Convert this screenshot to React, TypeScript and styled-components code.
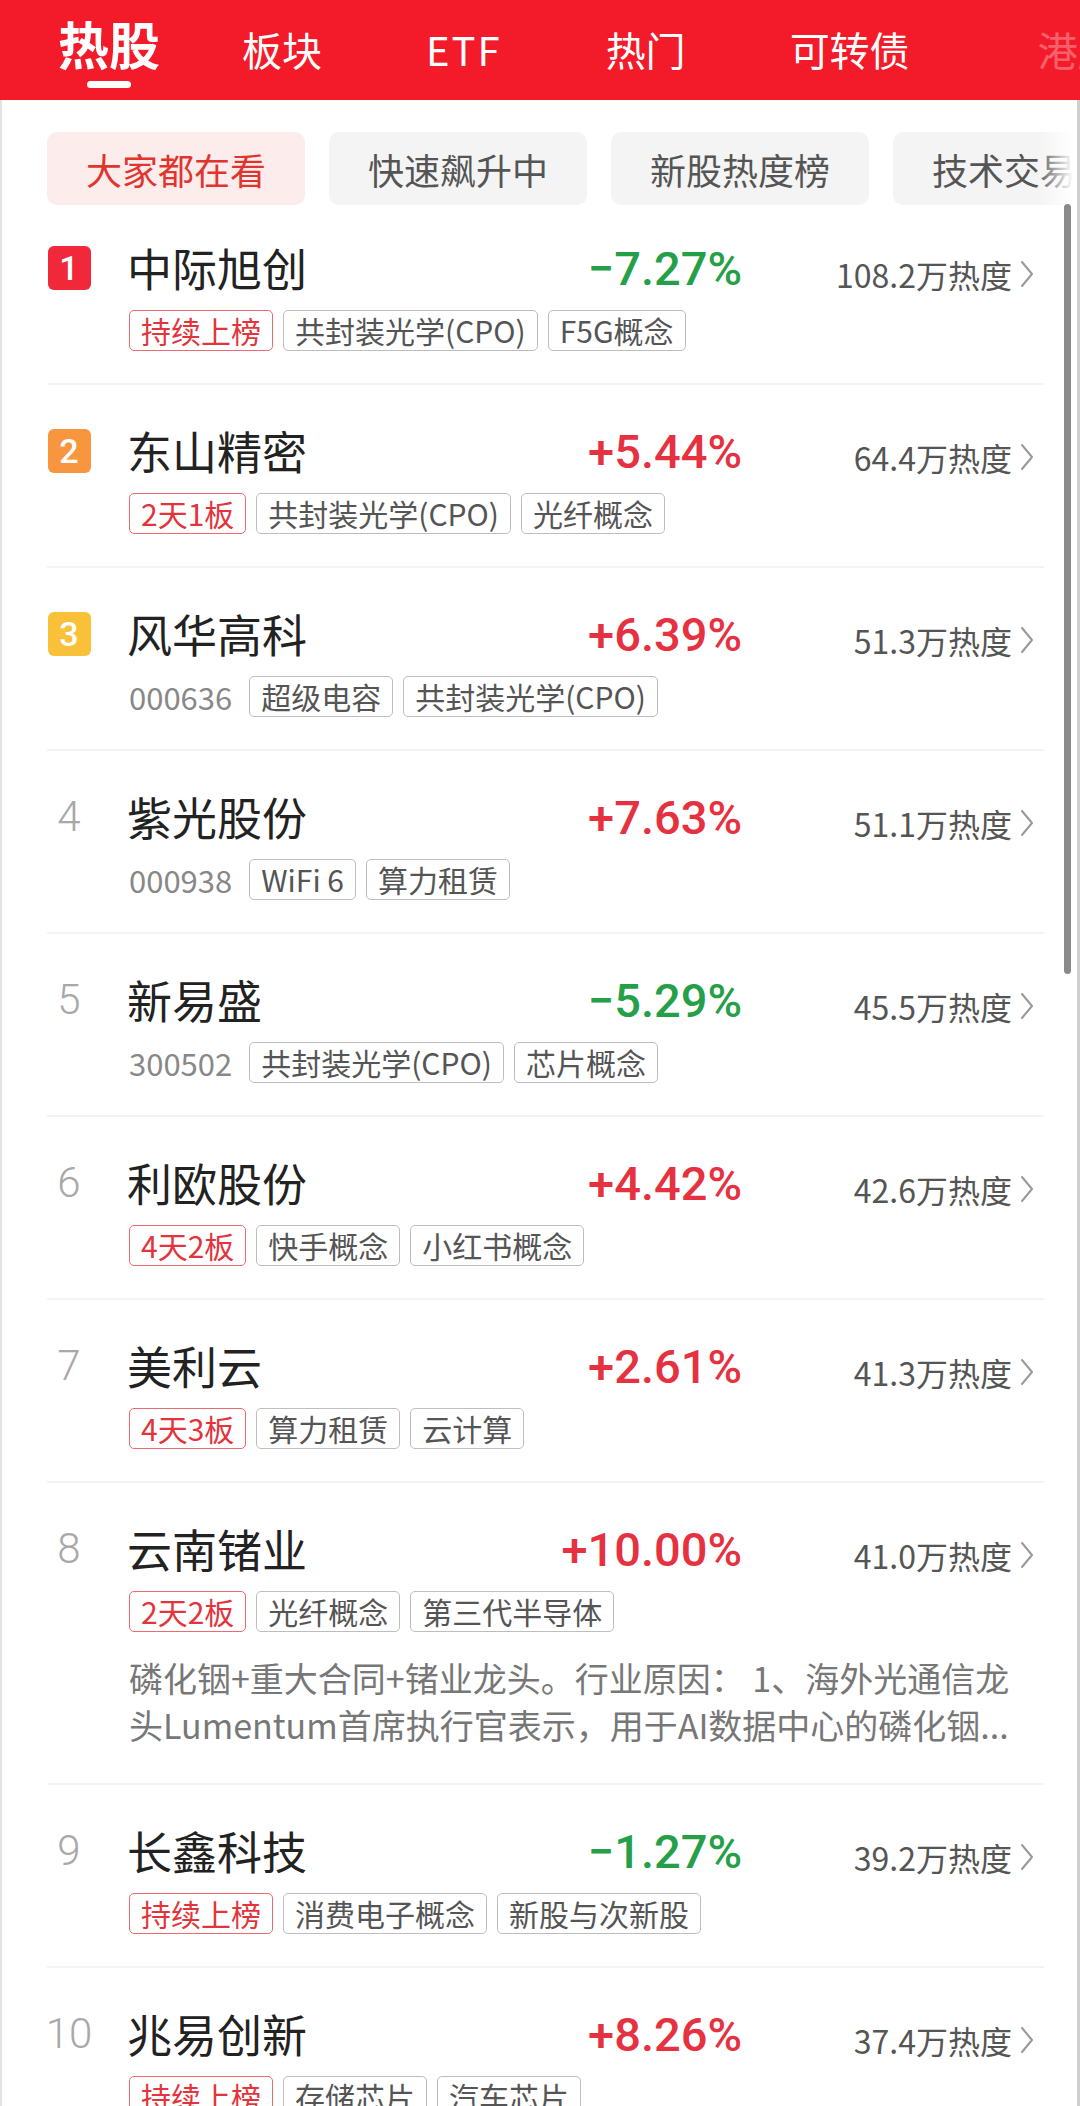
import React from "react";
import styled, { createGlobalStyle } from "styled-components";

const GlobalStyle = createGlobalStyle`
    html, body {
        margin: 0;
        padding: 0;
        background: #fff;
    }
    body {
        font-family: "Noto Sans CJK SC", "Noto Sans", sans-serif;
        color: #222;
    }
`;

const Page = styled.div`
    position: relative;
    width: 1080px;
    height: 2106px;
    overflow: hidden;
    background: #fff;
`;

const Header = styled.div`
    height: 100px;
    background: #f31b2a;
    display: flex;
    align-items: flex-end;
    padding: 0 0 31px 58px;
    box-sizing: border-box;
    gap: 104px;
    overflow: hidden;
    white-space: nowrap;
`;

const Tab = styled.div<{ $active?: boolean; $faded?: boolean; $latin?: boolean }>`
    position: relative;
    color: #fff;
    line-height: 1;
    font-size: ${(p) => (p.$active ? "51px" : "40px")};
    font-weight: ${(p) => (p.$active ? 700 : 400)};
    letter-spacing: ${(p) => (p.$latin ? "2px" : "0")};
    margin-right: ${(p) => (p.$active ? "-22px" : "0")};
    margin-left: ${(p) => (p.$faded ? "24px" : "0")};
    opacity: ${(p) => (p.$faded ? 0.3 : 1)};

    &::after {
        content: "";
        display: ${(p) => (p.$active ? "block" : "none")};
        position: absolute;
        left: 50%;
        bottom: -19px;
        transform: translateX(-50%);
        width: 44px;
        height: 7px;
        border-radius: 4px;
        background: #fff;
    }
`;

const Content = styled.div`
    position: relative;
    border-left: 2px solid #e4e4e4;
    border-right: 3px solid #cfcfcf;
    min-height: 2006px;
`;

const ChipRow = styled.div`
    position: relative;
    display: flex;
    gap: 24px;
    padding: 32px 0 0 45px;
    overflow: hidden;
    white-space: nowrap;

    &::after {
        content: "";
        position: absolute;
        right: 0;
        top: 32px;
        width: 40px;
        height: 73px;
        background: linear-gradient(to right, rgba(255, 255, 255, 0), #fff 90%);
    }
`;

const Chip = styled.div<{ $active?: boolean }>`
    flex-shrink: 0;
    height: 73px;
    padding: 0 39px;
    border-radius: 10px;
    display: flex;
    align-items: center;
    justify-content: center;
    font-size: 36px;
    background: ${(p) => (p.$active ? "#fdecec" : "#f4f4f4")};
    color: ${(p) => (p.$active ? "#e0352f" : "#555")};
`;

const ScrollThumb = styled.div`
    position: absolute;
    left: 1062px;
    top: 104px;
    width: 7px;
    height: 770px;
    border-radius: 4px;
    background: #8a8a8a;
`;

const List = styled.div`
    margin: -3px 33px 0 45px;
`;

const Row = styled.div`
    padding: 36px 10px 33px 0;
    border-bottom: 2px solid #f3f3f3;
`;

const TopLine = styled.div`
    display: flex;
    align-items: center;
    height: 60px;
`;

const RankCell = styled.div`
    width: 44px;
    margin-right: 36px;
    display: flex;
    justify-content: center;
`;

const Badge = styled.div<{ $bg: string }>`
    width: 43px;
    height: 44px;
    border-radius: 6px;
    background: ${(p) => p.$bg};
    color: #fff;
    font-family: Roboto, "Noto Sans", sans-serif;
    font-weight: 500;
    font-size: 34px;
    display: flex;
    align-items: center;
    justify-content: center;
`;

const RankNum = styled.div`
    color: #a8a8a8;
    font-family: Roboto, "Noto Sans", sans-serif;
    font-weight: 300;
    font-size: 42px;
    line-height: 1;
`;

const Name = styled.div`
    flex: 1;
    font-size: 45px;
    color: #222;
    line-height: 60px;
`;

const Pct = styled.div<{ $up: boolean }>`
    font-family: Roboto, "Noto Sans", sans-serif;
    font-weight: 500;
    font-size: 47px;
    color: ${(p) => (p.$up ? "#e63140" : "#25a048")};
    text-align: right;
`;

const Heat = styled.div`
    width: 292px;
    display: flex;
    justify-content: flex-end;
    align-items: center;
    gap: 8px;
    padding-top: 12px;
    font-size: 32px;
    color: #555;
`;

const Tags = styled.div`
    display: flex;
    align-items: center;
    gap: 10px;
    margin: 12px 0 0 82px;
    height: 40px;
    white-space: nowrap;
`;

const Code = styled.span`
    font-size: 31px;
    color: #888;
    margin-right: 7px;
`;

const Tag = styled.span<{ $red?: boolean }>`
    box-sizing: border-box;
    height: 41px;
    line-height: 38px;
    padding: 0 11px;
    border-radius: 5px;
    border: 1.5px solid ${(p) => (p.$red ? "#ec6a70" : "#bdbdbd")};
    color: ${(p) => (p.$red ? "#e3343c" : "#555")};
    font-size: 30px;
`;

const Desc = styled.div`
    margin: 23px 0 2px 82px;
    font-size: 34px;
    line-height: 47px;
    color: #777;
    white-space: nowrap;
`;

const Chevron = () => (
    <svg width="14" height="28" viewBox="0 0 14 28" fill="none">
        <path d="M2 2 L12 14 L2 26" stroke="#999" strokeWidth="2" strokeLinecap="round" strokeLinejoin="round" />
    </svg>
);

type Stock = {
    name: string;
    pct: string;
    heat: string;
    code?: string;
    badge?: string;
    tags: string[];
    desc?: string[];
};

const stocks: Stock[] = [
    { name: "中际旭创", pct: "−7.27%", heat: "108.2万热度", badge: "持续上榜", tags: ["共封装光学(CPO)", "F5G概念"] },
    { name: "东山精密", pct: "+5.44%", heat: "64.4万热度", badge: "2天1板", tags: ["共封装光学(CPO)", "光纤概念"] },
    { name: "风华高科", pct: "+6.39%", heat: "51.3万热度", code: "000636", tags: ["超级电容", "共封装光学(CPO)"] },
    { name: "紫光股份", pct: "+7.63%", heat: "51.1万热度", code: "000938", tags: ["WiFi 6", "算力租赁"] },
    { name: "新易盛", pct: "−5.29%", heat: "45.5万热度", code: "300502", tags: ["共封装光学(CPO)", "芯片概念"] },
    { name: "利欧股份", pct: "+4.42%", heat: "42.6万热度", badge: "4天2板", tags: ["快手概念", "小红书概念"] },
    { name: "美利云", pct: "+2.61%", heat: "41.3万热度", badge: "4天3板", tags: ["算力租赁", "云计算"] },
    {
        name: "云南锗业",
        pct: "+10.00%",
        heat: "41.0万热度",
        badge: "2天2板",
        tags: ["光纤概念", "第三代半导体"],
        desc: [
            "磷化铟+重大合同+锗业龙头。行业原因： 1、海外光通信龙",
            "头Lumentum首席执行官表示，用于AI数据中心的磷化铟...",
        ],
    },
    { name: "长鑫科技", pct: "−1.27%", heat: "39.2万热度", badge: "持续上榜", tags: ["消费电子概念", "新股与次新股"] },
    { name: "兆易创新", pct: "+8.26%", heat: "37.4万热度", badge: "持续上榜", tags: ["存储芯片", "汽车芯片"] },
];

const badgeColors = ["#f0283a", "#f7963f", "#f9c03a"];

const tabs = ["板块", "ETF", "热门", "可转债"];
const chips = ["大家都在看", "快速飙升中", "新股热度榜", "技术交易"];

export default function App() {
    return (
        <Page>
            <GlobalStyle />
            <Header>
                <Tab $active>热股</Tab>
                {tabs.map((t) => (
                    <Tab key={t} $latin={t === "ETF"}>
                        {t}
                    </Tab>
                ))}
                <Tab $faded>港股</Tab>
            </Header>
            <Content>
                <ChipRow>
                    {chips.map((c, i) => (
                        <Chip key={c} $active={i === 0}>
                            {c}
                        </Chip>
                    ))}
                </ChipRow>
                <List>
                    {stocks.map((s, i) => (
                        <Row key={s.name}>
                            <TopLine>
                                <RankCell>
                                    {i < 3 ? <Badge $bg={badgeColors[i]}>{i + 1}</Badge> : <RankNum>{i + 1}</RankNum>}
                                </RankCell>
                                <Name>{s.name}</Name>
                                <Pct $up={s.pct.startsWith("+")}>{s.pct}</Pct>
                                <Heat>
                                    {s.heat}
                                    <Chevron />
                                </Heat>
                            </TopLine>
                            <Tags>
                                {s.code && <Code>{s.code}</Code>}
                                {s.badge && <Tag $red>{s.badge}</Tag>}
                                {s.tags.map((t) => (
                                    <Tag key={t}>{t}</Tag>
                                ))}
                            </Tags>
                            {s.desc && (
                                <Desc>
                                    {s.desc.map((line) => (
                                        <div key={line}>{line}</div>
                                    ))}
                                </Desc>
                            )}
                        </Row>
                    ))}
                </List>
                <ScrollThumb />
            </Content>
        </Page>
    );
}
